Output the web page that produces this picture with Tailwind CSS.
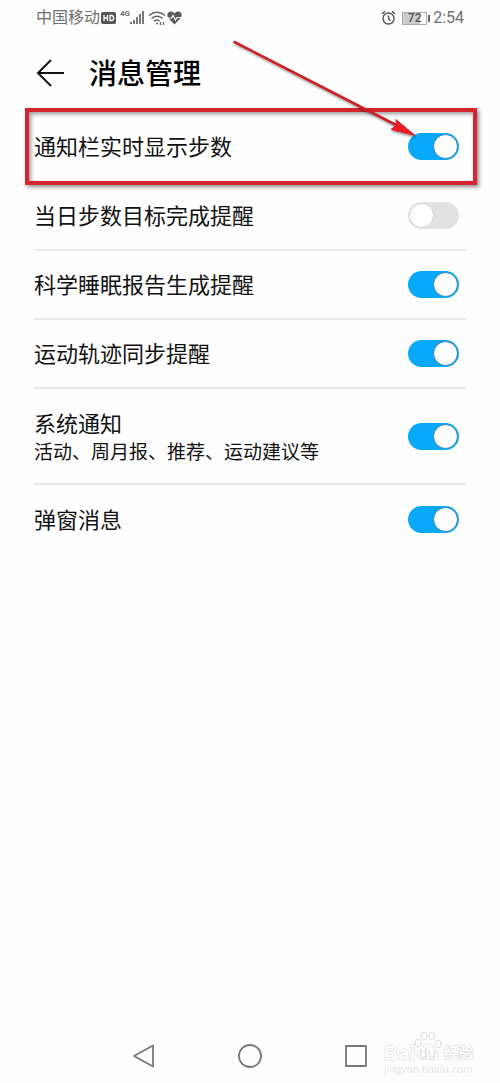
<!DOCTYPE html>
<html lang="zh-CN">
<head>
<meta charset="utf-8">
<meta name="viewport" content="width=device-width, initial-scale=1">
<title>消息管理</title>
<script src="https://cdn.jsdelivr.net/npm/@tailwindcss/browser@4"></script>
</head>
<body class="relative flex min-h-screen flex-col bg-[#fefefe] font-['Roboto','Noto_Sans_CJK_SC',sans-serif] text-[#111]">

<!-- status bar -->
<header class="flex h-9 items-center justify-between pr-9 pl-9 text-[#707070]">
  <div class="flex items-center">
    <span class="text-[16px] leading-5">中国移动</span>
    <svg class="ml-px h-3 w-[15px]" viewBox="0 0 15 12" aria-hidden="true">
      <rect width="15" height="12" rx="2" fill="#555"/>
      <path d="M3 3v6M6.500 3v6M3 6h3.500M9 3.500h1.200a2.500 2.500 0 0 1 0 5H9z" fill="none" stroke="#fff" stroke-width="1.300"/>
    </svg>
    <span class="mb-2 ml-1 text-[8px] leading-2 font-bold">4G</span>
    <svg class="h-4 w-[14px]" viewBox="0 0 14 16" fill="#777" aria-hidden="true">
      <path d="M0 12h2v2H0zM3 10h2v4H3zM6 7h2v7H6zM9 4h2v10H9zM12 1h2v13h-2z"/>
    </svg>
    <svg class="ml-1 h-4 w-[18px]" viewBox="0 0 18 16" fill="none" stroke="#666" stroke-width="1.500" aria-hidden="true">
      <path d="M1 5.500Q9-1 17 5.500M3.500 8.500Q9 4 14.500 8.500M6 11.200Q9 9 11.500 11.200"/>
      <circle cx="9" cy="13.500" r="1" fill="#666" stroke="none"/>
      <path d="M12.500 12v3M15.500 12v3" stroke-width="1.300"/>
    </svg>
    <svg class="ml-px h-[14px] w-[15px]" viewBox="0 0 15 14" aria-hidden="true">
      <path d="M7.500 13.500L1.300 7C-1 3.500 1 .5 4 .5c1.500 0 2.800.8 3.500 2C8.200 1.300 9.500.5 11 .5c3 0 5 3 2.700 6.500z" fill="#5a5a5a"/>
      <path d="M0 7h4.500L6 4.500l2.500 4.500L10 6.500h5" fill="none" stroke="#fff" stroke-width="1.200"/>
    </svg>
  </div>
  <div class="flex items-center">
    <svg class="h-4 w-[15px]" viewBox="0 0 14 16" fill="none" stroke="#555" stroke-width="1.400" aria-hidden="true">
      <circle cx="7" cy="8.500" r="5.500"/>
      <path d="M7 5.500v3.200l2 2M.6 4L3.500 1.200M13.400 4l-2.900-2.800"/>
    </svg>
    <div class="ml-[6px] flex h-[13px] w-[25px] items-center justify-center border border-[#aaa] bg-linear-to-r from-[#ccc] from-72% to-white to-72% text-[12px] leading-3 font-medium text-[#555]">72</div>
    <i class="ml-px h-[7px] w-[2px] bg-[#666]"></i>
    <time class="ml-[3px] text-[16px] leading-5">2:54</time>
  </div>
</header>

<!-- page title -->
<div class="flex h-[76px] items-center pl-9">
  <button type="button" aria-label="返回" class="mr-6">
    <svg class="h-[30px] w-[29px]" viewBox="0 0 29 30" fill="none" stroke="#111" stroke-width="2" aria-hidden="true">
      <path d="M28 14H2M15 1L2 14l13 13"/>
    </svg>
  </button>
  <h1 class="pt-0.5 text-[28px] leading-9 font-medium text-black">消息管理</h1>
</div>

<!-- settings -->
<main class="mr-[34px] ml-[34px] flex-1 text-[22px] leading-7">
  <label class="relative flex h-[70px] items-center justify-between pr-[7px] pb-px">
    <span class="pt-0.5">通知栏实时显示步数</span>
    <input type="checkbox" role="switch" checked class="h-[27px] w-[51px] appearance-none rounded-full bg-[#e2e2e2] before:mt-px before:ml-px before:block before:size-[25px] before:rounded-full before:border before:border-[#d5d5d5] before:bg-white checked:bg-[#08a9f8] checked:before:ml-[25px] checked:before:border-[#2c86b5]">
    <span class="pointer-events-none absolute -top-1 -right-[11px] -bottom-[3px] -left-[9px] border-4 border-[#d6242c] shadow-[2px_2px_4px_rgba(0,0,0,0.45),inset_2px_2px_4px_rgba(0,0,0,0.4)]"></span>
    <svg class="pointer-events-none absolute -top-[74px] right-[46px] h-[106px] w-[190px] drop-shadow-[1px_2px_1px_rgba(0,0,0,0.35)]" viewBox="230 38 190 106" aria-hidden="true">
      <path d="M234.500 42L396 125" stroke="#cf1f29" stroke-width="2.600" stroke-linecap="round"/>
      <path d="M415 135.500L391 129.500l5.500-4.500-.5-5.500z" fill="#ee1c24" stroke="#d8202a" stroke-width="1"/>
    </svg>
  </label>
  <label class="flex h-[69px] items-center justify-between border-b-2 border-[#e8e8e8] pr-[7px]">
    <span class="pt-0.5">当日步数目标完成提醒</span>
    <input type="checkbox" role="switch" class="h-[27px] w-[51px] appearance-none rounded-full bg-[#e2e2e2] before:mt-px before:ml-px before:block before:size-[25px] before:rounded-full before:border before:border-[#d5d5d5] before:bg-white checked:bg-[#08a9f8] checked:before:ml-[25px] checked:before:border-[#2c86b5]">
  </label>
  <label class="flex h-[69px] items-center justify-between border-b-2 border-[#e8e8e8] pr-[7px]">
    <span class="pt-0.5">科学睡眠报告生成提醒</span>
    <input type="checkbox" role="switch" checked class="h-[27px] w-[51px] appearance-none rounded-full bg-[#e2e2e2] before:mt-px before:ml-px before:block before:size-[25px] before:rounded-full before:border before:border-[#d5d5d5] before:bg-white checked:bg-[#08a9f8] checked:before:ml-[25px] checked:before:border-[#2c86b5]">
  </label>
  <label class="flex h-[69px] items-center justify-between border-b-2 border-[#e8e8e8] pr-[7px]">
    <span class="pt-0.5">运动轨迹同步提醒</span>
    <input type="checkbox" role="switch" checked class="h-[27px] w-[51px] appearance-none rounded-full bg-[#e2e2e2] before:mt-px before:ml-px before:block before:size-[25px] before:rounded-full before:border before:border-[#d5d5d5] before:bg-white checked:bg-[#08a9f8] checked:before:ml-[25px] checked:before:border-[#2c86b5]">
  </label>
  <label class="flex h-24 items-center justify-between border-b-2 border-[#e8e8e8] pr-[7px]">
    <span class="flex flex-col pt-1.5">
      <span>系统通知</span>
      <span class="text-[19px]">活动、周月报、推荐、运动建议等</span>
    </span>
    <input type="checkbox" role="switch" checked class="h-[27px] w-[51px] appearance-none rounded-full bg-[#e2e2e2] before:mt-px before:ml-px before:block before:size-[25px] before:rounded-full before:border before:border-[#d5d5d5] before:bg-white checked:bg-[#08a9f8] checked:before:ml-[25px] checked:before:border-[#2c86b5]">
  </label>
  <label class="flex h-[69px] items-center justify-between pr-[7px]">
    <span class="pt-0.5">弹窗消息</span>
    <input type="checkbox" role="switch" checked class="h-[27px] w-[51px] appearance-none rounded-full bg-[#e2e2e2] before:mt-px before:ml-px before:block before:size-[25px] before:rounded-full before:border before:border-[#d5d5d5] before:bg-white checked:bg-[#08a9f8] checked:before:ml-[25px] checked:before:border-[#2c86b5]">
  </label>
</main>

<!-- system navigation -->
<nav class="flex h-[55px] items-center justify-center gap-[82px]">
  <button type="button" aria-label="返回">
    <svg class="size-6" viewBox="0 0 24 24" fill="none" stroke="#777" stroke-width="1.800" stroke-linejoin="round" aria-hidden="true"><path d="M21 1.500v21L2 12z"/></svg>
  </button>
  <button type="button" aria-label="主屏幕">
    <svg class="size-6" viewBox="0 0 24 24" fill="none" stroke="#777" stroke-width="1.800" aria-hidden="true"><circle cx="12" cy="12" r="11"/></svg>
  </button>
  <button type="button" aria-label="最近任务">
    <svg class="size-6" viewBox="0 0 24 24" fill="none" stroke="#777" stroke-width="1.800" stroke-linejoin="round" aria-hidden="true"><rect x="2" y="2" width="20" height="20"/></svg>
  </button>
</nav>

<!-- watermark -->
<div class="pointer-events-none absolute right-6 bottom-2 w-[92px] font-['Liberation_Sans','Noto_Sans_CJK_SC',sans-serif] text-white">
  <svg class="absolute -top-3 left-[30px] h-[34px] w-[28px]" viewBox="0 0 28 34" fill="#fff" stroke="#ddd" aria-hidden="true">
    <ellipse cx="4" cy="12" rx="3" ry="4"/><ellipse cx="10" cy="5" rx="3" ry="4"/><ellipse cx="18" cy="5" rx="3" ry="4"/><ellipse cx="24" cy="13" rx="3" ry="4"/>
    <path d="M14 13c-4 0-5 4-8 6.500-4 3.500-2.500 9 2 9 3 0 4-.5 6-.5s3 .5 6 .5c4.500 0 6-5.500 2-9C19 17 18 13 14 13z"/>
  </svg>
  <div class="relative flex items-center leading-5 [-webkit-text-stroke:1px_#d8d8d8] [paint-order:stroke_fill]">
    <span class="text-[20px] font-bold">Bai</span>
    <span class="ml-1 text-[15px] text-[#ddd] [-webkit-text-stroke:0px]">du</span>
    <span class="ml-2 text-[15px] font-bold">经验</span>
  </div>
  <div class="text-[11px] leading-3 text-[#e6e6e6]">jingyan.baidu.com</div>
</div>
</body>
</html>
